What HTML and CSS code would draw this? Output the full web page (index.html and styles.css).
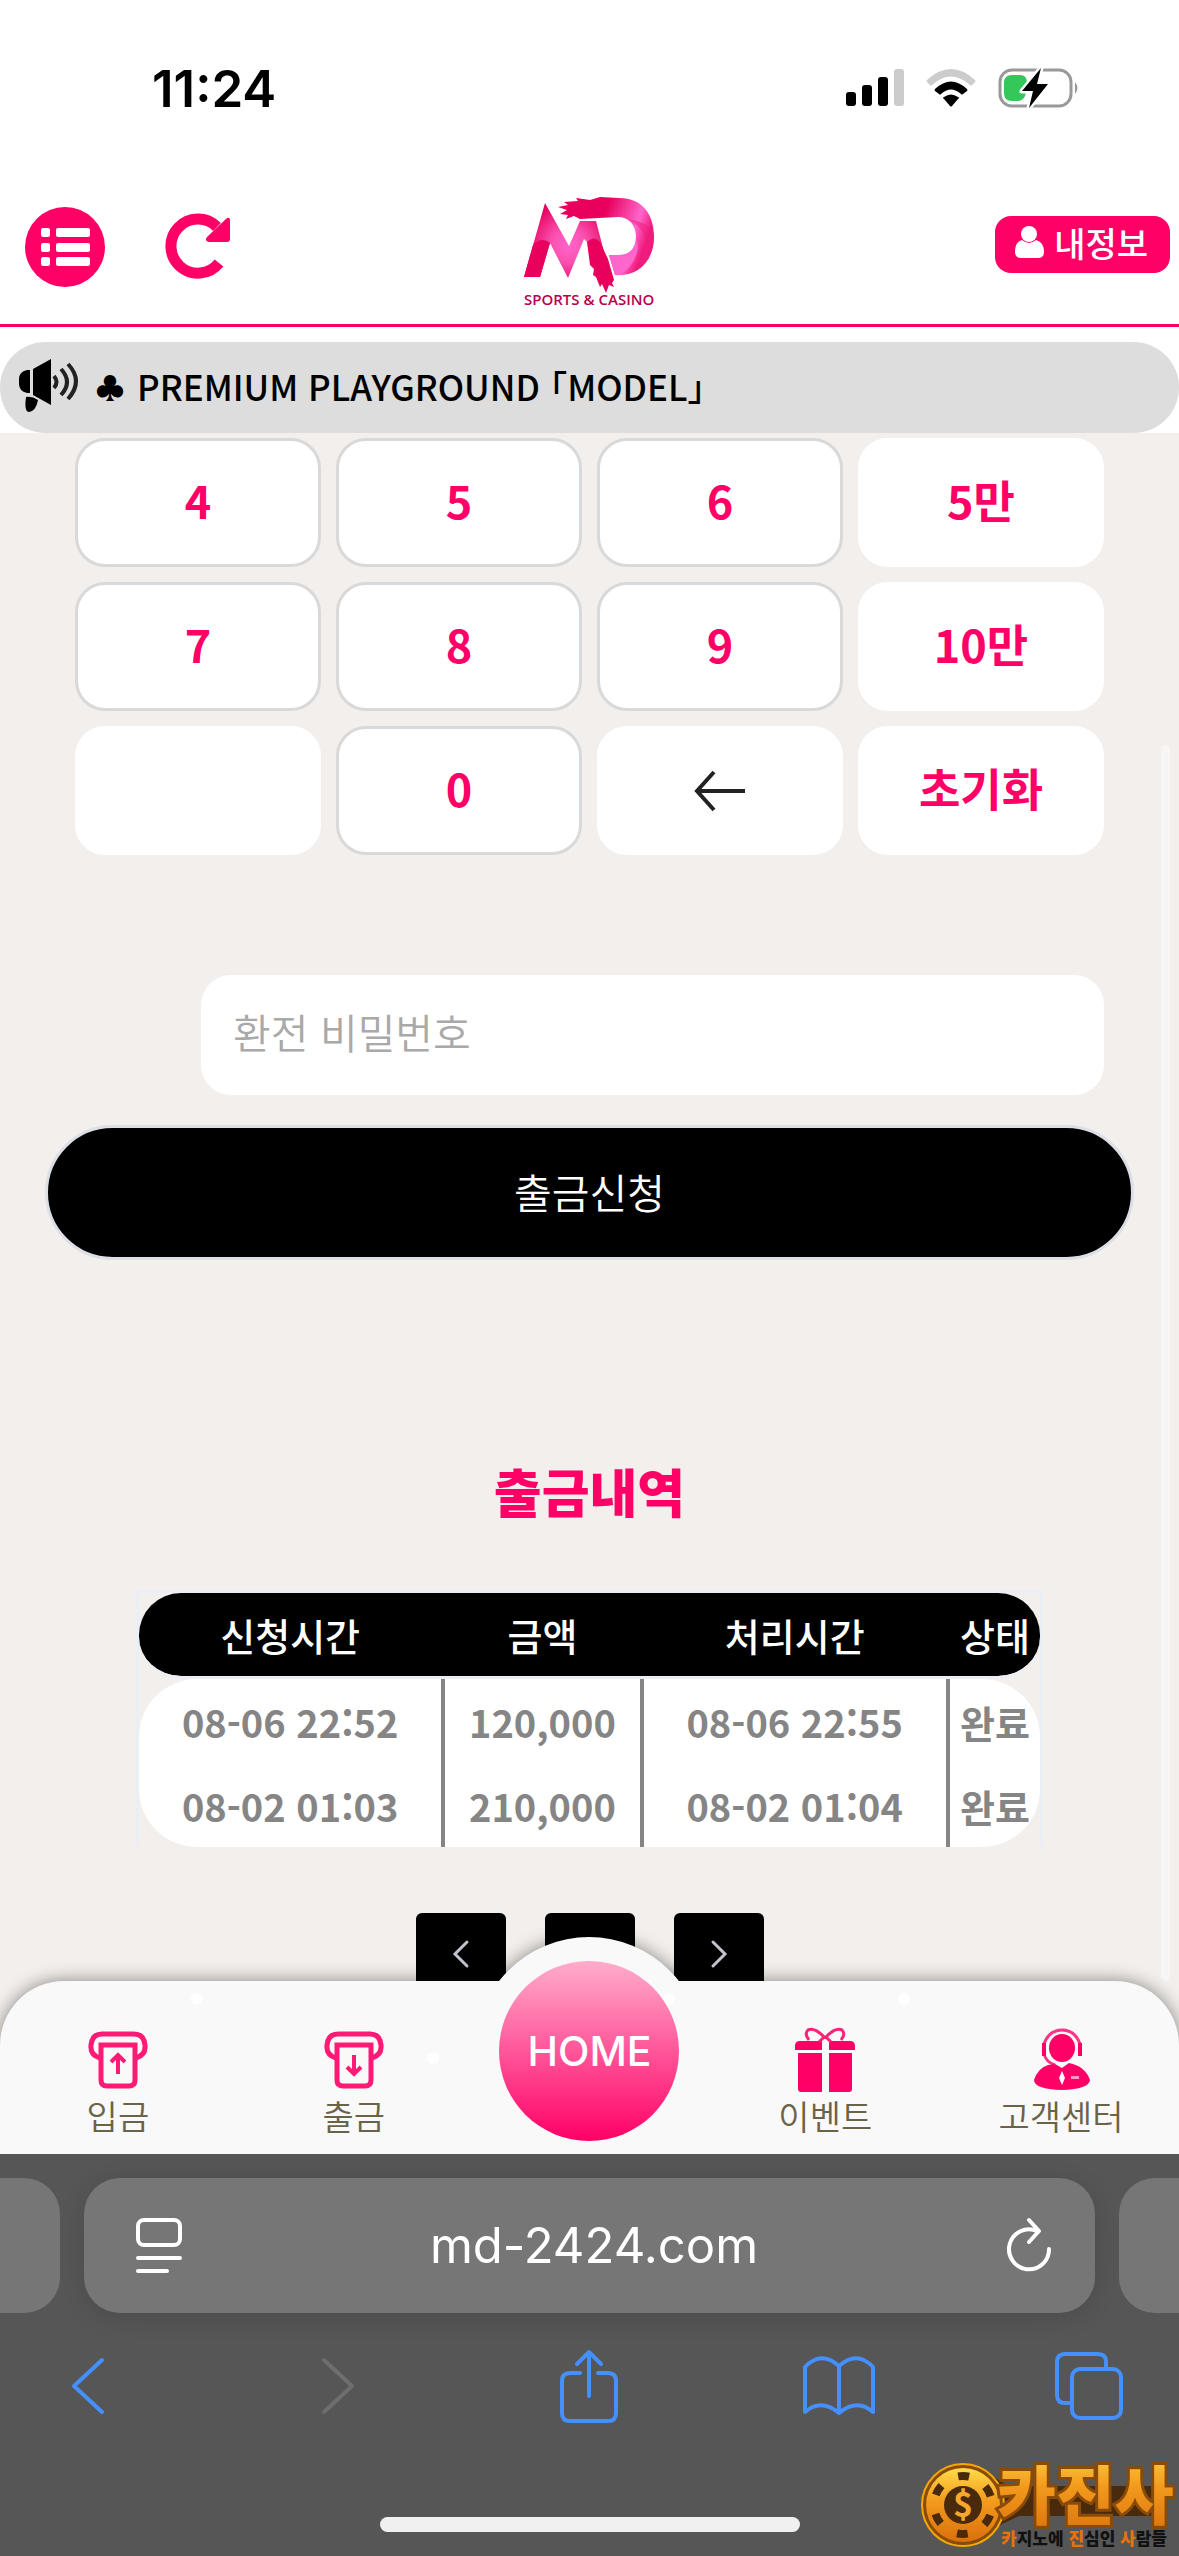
FILE: index.html
```html
<!DOCTYPE html>
<html lang="ko">
<head>
    <meta charset="UTF-8">
    <meta name="viewport" content="width=device-width, initial-scale=1.0">
    <title>출금신청</title>
    <link rel="stylesheet" href="styles.css">
</head>
<body>
    <div class="status">
        <span class="time">11:24</span>
        <div class="status-icons">
            <svg width="58" height="38" viewBox="0 0 58 38">
                <rect x="0" y="23" width="10" height="14" rx="3"/>
                <rect x="16" y="16" width="10" height="21" rx="3"/>
                <rect x="32" y="8" width="10" height="29" rx="3"/>
                <rect x="48" y="0" width="10" height="37" rx="3" fill="#ccc"/>
            </svg>
            <svg width="50" height="38" viewBox="0 0 50 38">
                <path d="M1 11Q25-11 49 11 50 12 49 13L46 16Q45 17 44 16 25-1 6 16 5 17 4 16L1 13Q0 12 1 11Z" fill="#ccc"/>
                <path d="M9 20Q25 5 41 20 42 21 41 22L37 25Q36 26 35 25 25 16 15 25 14 26 13 25L9 22Q8 21 9 20Z"/>
                <path d="M18 28Q25 23 32 28 34 29 32 30L26 37Q25 38 24 37L18 30Q16 29 18 28Z"/>
            </svg>
            <svg width="82" height="42" viewBox="0 0 82 42">
                <rect x="2" y="3" width="71" height="36" rx="12" fill="none" stroke="#999" stroke-width="3"/>
                <path d="M77 15q5 6 0 12z" fill="#999"/>
                <path d="M14 8h9q6 1 6 7L21 26h7q-2 8-8 8H14q-8 0-8-8V16q0-8 8-8z" fill="#34c759"/>
                <path d="M43 1L24 24H35L31 41 50 17H39z" stroke="#fff" stroke-width="5" stroke-linejoin="round" paint-order="stroke"/>
            </svg>
        </div>
    </div>

    <header class="header">
        <div class="header-left">
            <button class="icon-btn" aria-label="메뉴">
                <svg width="82" height="82" viewBox="0 0 82 82">
                    <circle cx="41" cy="41" r="40" fill="#ff0066"/>
                    <g fill="#fff">
                        <rect x="17" y="22" width="9" height="9" rx="2"/><rect x="32" y="22" width="34" height="9" rx="2"/>
                        <rect x="17" y="37" width="9" height="9" rx="2"/><rect x="32" y="37" width="34" height="9" rx="2"/>
                        <rect x="17" y="51" width="9" height="9" rx="2"/><rect x="32" y="51" width="34" height="9" rx="2"/>
                    </g>
                </svg>
            </button>
            <button class="icon-btn" aria-label="새로고침">
                <svg width="66" height="66" viewBox="0 0 66 66">
                    <path d="M53 49A27 27 0 1 1 51 13" fill="none" stroke="#ff0066" stroke-width="11"/>
                    <path d="M61 4q3-1 3 2v19q0 3-3 3H43q-5-1-2-5z" fill="#ff0066"/>
                </svg>
            </button>
        </div>
        <a class="logo" href="#" aria-label="MD Sports &amp; Casino">
            <svg width="132" height="112" viewBox="0 0 132 112">
                <defs>
                    <radialGradient id="m" gradientUnits="userSpaceOnUse" cx="45" cy="48" r="44">
                        <stop offset="0" stop-color="#ff66cc"/><stop offset="0.4" stop-color="#fa50b0"/><stop offset="1" stop-color="#e8005c"/>
                    </radialGradient>
                    <linearGradient id="d" x1="0" y1="0" x2="1" y2="0.3">
                        <stop offset="0.5" stop-color="#e8005c"/><stop offset="0.85" stop-color="#ff66cc"/><stop offset="1" stop-color="#f01b7c"/>
                    </linearGradient>
                </defs>
                <path d="M0 80L21 6 45 49 56 24H72L84 70 64 46 60 42 44 81 26 46 16 80Z" fill="url(#m)"/>
                <path d="M0 80L9 48Q18 39 26 46L16 80Z" fill="#e8005c"/>
                <path d="M63 45Q70 38 76 45L84 62 90 83 88 86 90 90 85 88 82 96 78 87 76 90 72 80 69 78 70 72 66 68Z" fill="#e8005c"/>
                <path d="M95 1C119 1 130 18 130 40 130 64 114 80 91 78L85 58H95C106 58 112 51 112 40 112 28 105 20 94 20L56 22 50 19 42 22 44 18 36 17 43 13 34 10 44 8 40 5 54 4 52 1 66 3 76 0Z" fill="url(#d)"/>
                <path d="M114 50Q112 68 96 78L91 78 85 58H95C106 58 112 51 112 40Z" fill="#ff66cc"/>
                <path d="M104 22Q130 36 118 66C127 60 131 46 130 36Q122 24 104 22Z" fill="#f01b7c" opacity=".5"/>
                <text x="0" y="108" class="logo-text">SPORTS &amp; CASINO</text>
            </svg>
        </a>
        <button class="my-info">
            <svg width="29" height="32" viewBox="0 0 29 32" fill="#fff">
                <ellipse cx="14" cy="8" rx="8" ry="8"/>
                <path d="M7 14q7 6 14 0 8 2 8 12 0 6-6 6H6q-6 0-6-6Q0 16 7 14z"/>
            </svg>
            내정보
        </button>
    </header>

    <div class="notice-wrap">
        <div class="notice">
            <svg width="60" height="54" viewBox="0 0 60 54">
                <path d="M8 11h3v23H8q-8-2-8-9v-5q0-7 8-9zM14 10L32 0V46L14 36zM7 38q6-1 12 3-2 11-9 12-5 0-3-15z"/>
                <g fill="none" stroke="#222" stroke-width="4">
                    <path d="M35 17q5 6 0 12"/><path d="M42 10q12 13 0 26"/><path d="M49 5q16 17 0 35"/>
                </g>
            </svg>
            <span class="club">♣</span>
            <span>PREMIUM PLAYGROUND 「MODEL」</span>
        </div>
    </div>

    <main class="content">
        <form class="withdraw">
            <div class="keypad">
                <button type="button" class="key">4</button>
                <button type="button" class="key">5</button>
                <button type="button" class="key">6</button>
                <button type="button" class="key plain">5만</button>
                <button type="button" class="key">7</button>
                <button type="button" class="key">8</button>
                <button type="button" class="key">9</button>
                <button type="button" class="key plain">10만</button>
                <button type="button" class="key plain" aria-label="빈 키"></button>
                <button type="button" class="key">0</button>
                <button type="button" class="key plain back" aria-label="지우기">
                    <svg width="52" height="40" viewBox="0 0 52 40" fill="none" stroke="#222" stroke-width="4">
                        <path d="M20 1L3 20 20 39M3 20H51"/>
                    </svg>
                </button>
                <button type="button" class="key plain">초기화</button>
            </div>
            <input class="password" type="password" placeholder="환전 비밀번호" aria-label="환전 비밀번호">
            <button type="button" class="submit">출금신청</button>
        </form>

        <section class="history">
            <h2>출금내역</h2>
            <table>
                <colgroup><col class="c-date"><col class="c-amount"><col class="c-date"><col class="c-state"></colgroup>
                <thead>
                    <tr><th>신청시간</th><th>금액</th><th>처리시간</th><th>상태</th></tr>
                </thead>
                <tbody>
                    <tr><td>08-06 22:52</td><td>120,000</td><td>08-06 22:55</td><td>완료</td></tr>
                    <tr><td>08-02 01:03</td><td>210,000</td><td>08-02 01:04</td><td>완료</td></tr>
                </tbody>
            </table>
            <div class="pages">
                <button aria-label="이전">
                    <svg width="16" height="28" viewBox="0 0 16 28"><path d="M14 2L2 14 14 26"/></svg>
                </button>
                <button aria-label="현재 페이지"></button>
                <button aria-label="다음">
                    <svg width="16" height="28" viewBox="0 0 16 28"><path d="M2 2L14 14 2 26"/></svg>
                </button>
            </div>
        </section>
        <div class="scrollbar"></div>
    </main>

    <nav class="tabbar">
        <a href="#">
            <svg width="60" height="62" viewBox="0 0 60 62" fill="none" stroke="#ff1a75" stroke-width="5">
                <path d="M12 28Q2 25 3 15 4 4 14 4H46Q56 4 57 15 58 25 48 28"/>
                <path d="M13 15H47V50Q47 56 41 56H19Q13 56 13 50Z"/>
                <path d="M30 44V26M23 32L30 25 37 32" stroke-width="4"/>
            </svg>
            입금
        </a>
        <a href="#">
            <svg width="60" height="62" viewBox="0 0 60 62" fill="none" stroke="#ff1a75" stroke-width="5">
                <path d="M12 28Q2 25 3 15 4 4 14 4H46Q56 4 57 15 58 25 48 28"/>
                <path d="M13 15H47V50Q47 56 41 56H19Q13 56 13 50Z"/>
                <path d="M30 25V43M23 37L30 44 37 37" stroke-width="4"/>
            </svg>
            출금
        </a>
        <a href="#" class="home"><span>HOME</span></a>
        <a href="#">
            <svg width="60" height="64" viewBox="0 0 60 64" fill="#ff0066">
                <path d="M5 13H27V22H0V18Q0 13 5 13zM34 13H55Q60 13 60 18V22H34zM3 25H27V64H6Q3 64 3 61zM34 25H57V61Q57 64 54 64H34z"/>
                <path d="M30 10Q20-1 13 2 9 6 14 12M30 10Q40-1 47 2 51 6 46 12M30 8L24 14M30 8L36 14" fill="none" stroke="#ff2277" stroke-width="3"/>
            </svg>
            이벤트
        </a>
        <a href="#">
            <svg width="60" height="64" viewBox="0 0 60 64" fill="#ff0066">
                <ellipse cx="31" cy="20" rx="13" ry="14"/>
                <path d="M13 24V16Q18 2 31 2T49 16V24M13 26Q15 34 24 37" fill="none" stroke="#ff3388" stroke-width="3"/>
                <path d="M11 15h4v13h-4zM47 15h4v13h-4z"/>
                <path d="M24 36L31 40 38 35Q54 38 59 52 58 61 31 62 3 61 3 52 7 40 17 37z"/>
                <path d="M31 43L34 50 31 57 28 50z" fill="#fff"/>
                <path d="M40 48h8v3h-8z" fill="#ff99c2"/>
            </svg>
            고객센터
        </a>
        <i class="dot d1"></i><i class="dot d2"></i><i class="dot d3"></i><i class="dot d4"></i>
    </nav>

    <footer class="browser">
        <div class="address-row">
            <div class="peek left"></div>
            <div class="address">
                <button aria-label="페이지 메뉴">
                    <svg width="46" height="56" viewBox="0 0 46 56" fill="none" stroke="#fff" stroke-width="4" stroke-linecap="round">
                        <rect x="2" y="2" width="42" height="25" rx="6"/><path d="M2 40H44M2 53H31"/>
                    </svg>
                </button>
                <span>md-2424.com</span>
                <button aria-label="새로고침">
                    <svg width="46" height="56" viewBox="0 0 46 56" fill="none" stroke="#fff" stroke-width="4" stroke-linecap="round" stroke-linejoin="round">
                        <path d="M43 31A20 20 0 1 1 31 13M23 2L33 13 23 24"/>
                    </svg>
                </button>
            </div>
            <div class="peek right"></div>
        </div>
        <div class="toolbar">
            <button aria-label="뒤로"><svg width="34" height="56" viewBox="0 0 34 56"><path d="M31 2L3 28 31 54"/></svg></button>
            <button aria-label="앞으로" disabled><svg width="34" height="56" viewBox="0 0 34 56"><path d="M3 2L31 28 3 54"/></svg></button>
            <button aria-label="공유"><svg width="58" height="74" viewBox="0 0 58 74"><path d="M20 24H10Q2 24 2 32V64Q2 72 10 72H48Q56 72 56 64V32Q56 24 48 24H38M29 47V4M17 15L29 3 41 15"/></svg></button>
            <button aria-label="책갈피"><svg width="72" height="60" viewBox="0 0 72 60"><path d="M36 10V57Q18 42 2 56V11Q18-6 36 10Q54-6 70 11V56Q54 42 36 57"/></svg></button>
            <button aria-label="탭"><svg width="68" height="68" viewBox="0 0 68 68"><rect x="17" y="17" width="49" height="49" rx="8"/><path d="M16 51H10Q2 51 2 43V10Q2 2 10 2H43Q51 2 51 10V16"/></svg></button>
        </div>
        <div class="home-indicator"></div>
    </footer>

    <div class="watermark">
        <svg width="254" height="90" viewBox="0 0 254 90">
            <defs>
                <linearGradient id="gold" x1="0" y1="0" x2="0" y2="1">
                    <stop offset="0" stop-color="#ffdb4a"/><stop offset="0.45" stop-color="#f39a1c"/><stop offset="1" stop-color="#d9700c"/>
                </linearGradient>
            </defs>
            <path d="M62 10L90 26H240V56H100L66 72Z" fill="#4a2a0c"/>
            <circle cx="44" cy="45" r="41" fill="#8a4a08" stroke="#f5a800" stroke-width="2"/>
            <circle cx="44" cy="45" r="37" fill="url(#gold)"/>
            <circle cx="44" cy="45" r="29" fill="none" stroke="#4a2a0c" stroke-width="8" stroke-dasharray="11 19.37" stroke-dashoffset="5" transform="rotate(90 44 45)"/>
            <circle cx="44" cy="45" r="19" fill="#4a2a0c"/>
            <text x="44" y="57" class="coin">$</text>
            <text x="78" y="59" class="brand-edge">카진사</text>
        </svg>
        <p class="slogan"><b>카</b>지노에 <b>진</b>심인 <b>사</b>람들</p>
    </div>
</body>
</html>
```
FILE: styles.css
```css
* {
    box-sizing: border-box;
}
body {
    margin: 0;
    height: 100vh;
    display: flex;
    flex-direction: column;
    position: relative;
    overflow: hidden;
    background-color: #f2efec;
    font-family: "Noto Sans CJK KR", "Noto Sans", sans-serif;
}
button {
    font-family: inherit;
    border: 0;
    padding: 0;
    background: none;
}
svg {
    display: block;
    flex: none;
    overflow: visible;
}
a {
    text-decoration: none;
    color: inherit;
}

/* phone status bar */
.status {
    display: flex;
    justify-content: space-between;
    align-items: center;
    height: 176px;
    padding: 0 99px 0 152px;
    background-color: white;
}
.time {
    font-family: Inter, sans-serif;
    font-size: 51px;
    font-weight: 600;
}
.status-icons {
    display: flex;
    align-items: center;
    gap: 22px;
}

/* header */
.header {
    display: grid;
    grid-template-columns: 1fr auto 1fr;
    align-items: center;
    height: 151px;
    padding: 0 9px 6px;
    background-color: white;
    border-bottom: 3px solid #ff0066;
}
.header-left {
    display: flex;
    align-items: center;
    gap: 60px;
    padding-left: 15px;
}
.logo {
    padding-top: 12px;
}
.logo-text {
    font-family: "Open Sans", sans-serif;
    font-size: 15px;
    font-weight: 600;
    fill: #b8004a;
}
.my-info {
    display: flex;
    justify-self: end;
    align-items: center;
    gap: 10px;
    height: 57px;
    margin-bottom: 6px;
    padding: 0 22px 4px 20px;
    border-radius: 16px;
    background-color: #ff0066;
    color: white;
    font-size: 34px;
    font-weight: 500;
}
.notice-wrap {
    padding-top: 15px;
    background-color: white;
}
.notice {
    display: flex;
    align-items: center;
    height: 91px;
    padding: 0 19px 4px;
    border-radius: 46px;
    background-color: #ddd;
    font-size: 35px;
    font-weight: 500;
    font-feature-settings: "halt";
}
.club {
    width: 58px;
    padding-left: 16px;
    font-size: 30px;
}

/* withdraw form */
.content {
    position: relative;
    flex: 1 1 0;
    min-height: 0;
    padding: 5px 45px 0;
}
.withdraw {
    display: flex;
    flex-direction: column;
}
.keypad {
    display: grid;
    grid-template-columns: repeat(4, 1fr);
    grid-auto-rows: 129px;
    gap: 15px;
    margin: 0 30px;
}
.key {
    display: flex;
    justify-content: center;
    align-items: center;
    padding-bottom: 6px;
    border: 3px solid #d9d9d9;
    border-radius: 30px;
    background-color: white;
    color: #ff0066;
    font-size: 45px;
    font-weight: 700;
}
.plain {
    border-color: white;
}
.back {
    padding-bottom: 0;
}
.password {
    height: 120px;
    margin: 120px 30px 30px 156px;
    padding: 0 32px 8px;
    border: 0;
    border-radius: 30px;
    background-color: white;
    font-family: inherit;
    font-size: 41px;
    font-weight: 350;
}
.password::placeholder {
    color: #a9a9a9;
}
.submit {
    height: 135px;
    padding-bottom: 4px;
    border: 3px solid #dcdfe6;
    border-radius: 68px;
    background-color: black;
    color: white;
    font-size: 41px;
    font-weight: 350;
}

/* history */
.history {
    margin: 0 91px;
}
.history h2 {
    margin: 190px 0 58px;
    text-align: center;
    font-size: 52px;
    line-height: 82px;
    font-weight: 900;
    color: #ff0066;
}
table {
    width: 100%;
    table-layout: fixed;
    border-spacing: 0;
    border: 3px solid #ebeef5;
    border-bottom: 0;
    font-size: 38px;
}
.c-date {
    width: 34%;
}
.c-amount {
    width: 22%;
}
.c-state {
    width: 10%;
}
th, td {
    height: 84px;
    padding: 0;
    text-align: center;
    white-space: nowrap;
}
th {
    height: 86px;
    padding-right: 4px;
    background-color: black;
    color: white;
    font-weight: 500;
    border-bottom: 3px solid #ebeef5;
    background-clip: padding-box;
}
th:first-child {
    border-radius: 42px 0 0 42px;
}
th:last-child {
    padding-right: 0;
    border-radius: 0 42px 42px 0;
}
td {
    background-color: white;
    color: #858585;
    font-weight: 700;
    border-right: 4px solid #858585;
}
td:last-child {
    border-right: 0;
}
tbody tr:first-child td:first-child {
    border-top-left-radius: 58px;
}
tbody tr:first-child td:last-child {
    border-top-right-radius: 58px;
}
tbody tr:last-child td:first-child {
    border-bottom-left-radius: 58px;
}
tbody tr:last-child td:last-child {
    border-bottom-right-radius: 58px;
}
.pages {
    display: flex;
    justify-content: center;
    gap: 39px;
    margin-top: 66px;
}
.pages button {
    display: flex;
    justify-content: center;
    align-items: center;
    width: 90px;
    height: 82px;
    border-radius: 6px;
    background-color: black;
}
.pages path {
    fill: none;
    stroke: #c0c4cc;
    stroke-width: 3;
    stroke-linecap: round;
}
.scrollbar {
    position: absolute;
    top: 312px;
    right: 9px;
    bottom: 0;
    width: 9px;
    border-radius: 5px;
    background-color: #f8f6f5;
}

/* bottom tabs */
.tabbar {
    position: relative;
    display: grid;
    grid-template-columns: repeat(5, 1fr);
    height: 173px;
    border-radius: 64px 64px 0 0;
    background-color: #f9f9f9;
    box-shadow: 0 0 18px rgba(0, 0, 0, 0.45);
}
.tabbar a {
    display: flex;
    flex-direction: column;
    align-items: center;
    justify-content: flex-end;
    padding-bottom: 14px;
    font-size: 34px;
    line-height: 48px;
    font-weight: 350;
    color: #6b6347;
}
/* round button that rises over the bar */
.tabbar .home {
    position: relative;
    padding: 0;
}
.home::before {
    content: "";
    position: absolute;
    top: -44px;
    width: 228px;
    height: 228px;
    border-radius: 50%;
    background-color: #f9f9f9;
    box-shadow: 0 0 18px rgba(0, 0, 0, 0.45);
    clip-path: inset(-20px -20px 184px -20px);
}
.home span {
    position: absolute;
    top: -20px;
    z-index: 1;
    width: 180px;
    height: 180px;
    border-radius: 50%;
    background: linear-gradient(#ffaccc, #ff0066);
    color: white;
    font-family: Inter, sans-serif;
    font-size: 41px;
    font-weight: 500;
    line-height: 180px;
    text-align: center;
}
.dot {
    position: absolute;
    top: 12px;
    width: 12px;
    height: 12px;
    border-radius: 50%;
    background-color: white;
}
.d1 {
    left: 16.2%;
}
.d2 {
    left: 36.2%;
    top: 71px;
}
.d3 {
    left: 56.2%;
}
.d4 {
    left: 76.2%;
}

/* browser chrome */
.browser {
    position: relative;
    height: 402px;
    padding-top: 24px;
    background-color: #565656;
}
.address-row {
    display: flex;
    gap: 24px;
    height: 135px;
}
.peek {
    width: 60px;
    background-color: #767676;
}
.left {
    border-radius: 0 36px 36px 0;
}
.right {
    border-radius: 36px 0 0 36px;
}
.address {
    flex: 1;
    display: flex;
    justify-content: space-between;
    align-items: center;
    padding: 0 43px 0 52px;
    border-radius: 36px;
    background-color: #767676;
    box-shadow: 0 4px 24px rgba(0, 0, 0, 0.12);
    color: white;
    font-family: Inter, sans-serif;
    font-size: 49px;
}
.toolbar {
    display: flex;
    justify-content: space-between;
    align-items: center;
    padding: 36px 54px 0 52px;
}
.toolbar button {
    display: flex;
    justify-content: center;
    width: 72px;
}
.toolbar path, .toolbar rect {
    fill: none;
    stroke: #458fff;
    stroke-width: 4;
    stroke-linecap: round;
    stroke-linejoin: round;
}
.toolbar button:disabled path {
    stroke: #6e6e6e;
}
.home-indicator {
    position: absolute;
    bottom: 24px;
    left: 50%;
    width: 420px;
    height: 15px;
    margin-left: -210px;
    border-radius: 8px;
    background-color: #f0f0f0;
}

/* site mark in the corner */
.watermark {
    position: absolute;
    right: 6px;
    bottom: 6px;
}
.coin {
    font-size: 34px;
    font-weight: 700;
    fill: #f7a72a;
    text-anchor: middle;
}
.brand-edge {
    font-size: 64px;
    font-weight: 900;
    fill: url(#gold);
    stroke: #8a4a08;
    stroke-width: 6;
    paint-order: stroke;
}
.slogan {
    position: absolute;
    right: 6px;
    bottom: 0;
    margin: 0;
    font-size: 17px;
    line-height: 24px;
    font-weight: 900;
    color: #111;
}
.slogan b {
    font-weight: 900;
    color: #e8720c;
}
```
